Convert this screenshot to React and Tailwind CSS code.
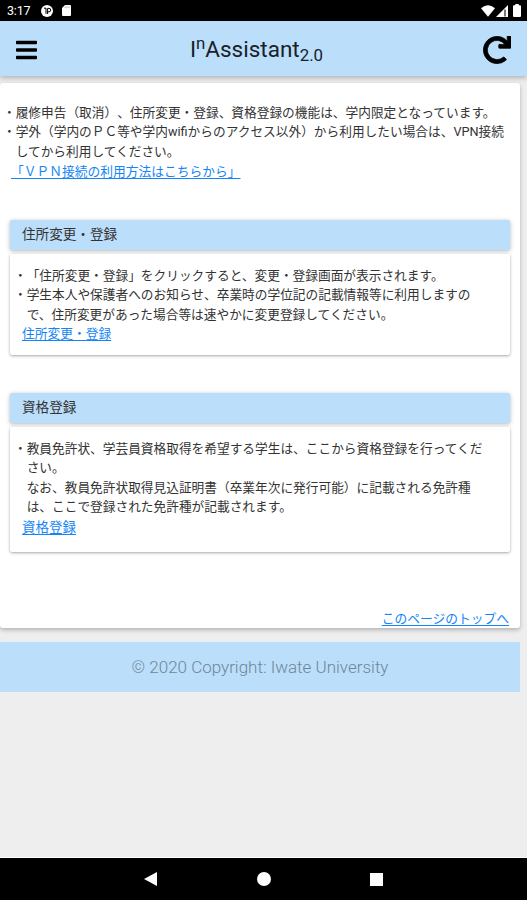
import { FaBars, FaRedo } from "react-icons/fa";

const SECCIONES = [
  {
    titulo: "住所変更・登録",
    lineas: [
      "・「住所変更・登録」をクリックすると、変更・登録画面が表示されます。",
      "・学生本人や保護者へのお知らせ、卒業時の学位記の記載情報等に利用しますの",
      "　で、住所変更があった場合等は速やかに変更登録してください。",
    ],
    enlace: "住所変更・登録",
    caja: "mt-[4px] h-[101px] mb-[1px] pt-[12px]",
    tamEnlace: "text-[12.75px]",
  },
  {
    titulo: "資格登録",
    lineas: [
      "・教員免許状、学芸員資格取得を希望する学生は、ここから資格登録を行ってくだ",
      "　さい。",
      "　なお、教員免許状取得見込証明書（卒業年次に発行可能）に記載される免許種",
      "　は、ここで登録された免許種が記載されます。",
    ],
    enlace: "資格登録",
    caja: "mt-[4px] h-[125px] pt-[12px]",
    tamEnlace: "text-[13.5px]",
  },
];

function BarraEstado() {
  return (
    <div className="h-[21px] bg-black text-white flex items-center justify-between pl-[7px] pr-[6px]">
      <div className="flex items-center">
        <span className="text-[12.5px] leading-none w-[26px] tracking-[-0.2px] mt-[2px]">3:17</span>
        <svg className="ml-[8px] w-[12px] h-[12px]" viewBox="0 0 12 12">
          <circle cx="6" cy="6" r="6" fill="#fff" />
          <path d="M3 3.200h2v5.600M6.600 9V3.400h1.400a1.600 1.600 0 0 1 0 3.400H6.600" fill="none" stroke="#000" strokeWidth="1" />
        </svg>
        <svg className="ml-[9px] w-[9px] h-[11px]" viewBox="0 0 9 11">
          <path d="M3 0h5a1 1 0 0 1 1 1v9a1 1 0 0 1-1 1H1a1 1 0 0 1-1-1V3z" fill="#fff" />
          <path d="M3.2 1.3v1.8M5 1.3v1.8M6.8 1.3v1.8" stroke="#999" strokeWidth=".7" />
        </svg>
      </div>
      <div className="flex items-center">
        <svg className="w-[14px] h-[12px]" viewBox="0 0 14 12">
          <path d="M0 3.2Q7-2.6 14 3.2L7 11.8z" fill="#fff" />
        </svg>
        <svg className="ml-[1px] w-[12px] h-[12px]" viewBox="0 0 12 12">
          <path d="M0 12L12 0v12z" fill="#fff" />
          <path d="M9 4.500v7" stroke="#555" strokeWidth="1.6" />
        </svg>
        <svg className="ml-[5px] w-[8px] h-[13px]" viewBox="0 0 8 13">
          <path d="M2.3 0h3.4v1.2H7a1 1 0 0 1 1 1V12a1 1 0 0 1-1 1H1a1 1 0 0 1-1-1V2.200a1 1 0 0 1 1-1h1.300z" fill="#fff" />
        </svg>
      </div>
    </div>
  );
}

function Enlace({ className = "", children }) {
  return (
    <a href="#top" className={`text-[#1585f5] underline decoration-1 underline-offset-[2px] whitespace-nowrap ${className}`}>
      {children}
    </a>
  );
}

function Lineas({ lineas }) {
  return lineas.map((l, i) => (
    <p key={i} className="h-[19.4px] leading-[19.4px] text-[12.69px] whitespace-pre">{l}</p>
  ));
}

function Seccion({ s }) {
  return (
    <section>
      <h2 className="h-[30px] leading-[28px] pl-[12px] bg-[#bbdefb] text-[13.6px] rounded-[2px] shadow-[0_1px_4px_rgba(0,0,0,0.3)]">
        {s.titulo}
      </h2>
      <div className={`pl-[4px] rounded-[2px] bg-white shadow-[0_1px_3px_rgba(0,0,0,0.35)] ${s.caja}`}>
        <Lineas lineas={s.lineas} />
        <p className="pl-[8px] h-[20px] leading-[20px]"><Enlace className={s.tamEnlace}>{s.enlace}</Enlace></p>
      </div>
    </section>
  );
}

export default function App() {
  return (
    <div id="top" className="w-[527px] h-[900px] flex flex-col overflow-hidden bg-[#eeeeee] text-[#333] [text-spacing-trim:space-all] font-['Roboto','Noto_Sans_CJK_JP',sans-serif]">
      <BarraEstado />

      <header className="h-[55px] shrink-0 bg-[#bbdefb] flex items-center justify-between pl-[16px] pr-[16px] text-black shadow-[0_2px_5px_rgba(0,0,0,0.25)]">
        <FaBars className="w-[21px] h-[24px] mt-[2px]" />
        <h1 className="text-[22.5px] leading-none whitespace-nowrap text-[#1a2127] font-normal mr-[7px] mt-[2px]">
          I<sup className="text-[75%]">n</sup>Assistant<sub className="text-[75%]">2.0</sub>
        </h1>
        <FaRedo className="w-[28px] h-[28px] mt-[2px]" stroke="currentColor" strokeWidth="14" />
      </header>

      <main className="w-[520px] h-[545px] mt-[7px] shrink-0 bg-white rounded-[3px] shadow-[0_2px_4px_rgba(0,0,0,0.25)] text-[12.75px] flex flex-col">
        <div className="pl-[3px] pt-[20px] h-[137px]">
          <Lineas
            lineas={[
              "・履修申告（取消）、住所変更・登録、資格登録の機能は、学内限定となっています。",
              "・学外（学内のＰＣ等や学内wifiからのアクセス以外）から利用したい場合は、VPN接続",
              "　してから利用してください。",
            ]}
          />
          <p className="pl-[8px] h-[20px] leading-[21px]"><Enlace>「ＶＰＮ接続の利用方法はこちらから」</Enlace></p>
        </div>
        <div className="pl-[10px] pr-[10px] flex flex-col gap-[37px]">
          {SECCIONES.map(s => <Seccion key={s.titulo} s={s} />)}
        </div>
        <p className="mt-auto pr-[11px] text-right leading-[19px]"><Enlace>このページのトップへ</Enlace></p>
      </main>

      <footer className="w-[520px] h-[50px] mt-[14px] shrink-0 bg-[#bbdefb] text-center text-[17px] leading-[50px] font-light text-[#6f8697]">
        © 2020 Copyright: Iwate University
      </footer>

      {/* Barra de navegación de Android */}
      <nav className="mt-auto h-[43px] shrink-0 bg-black border-t border-white flex items-center pl-[144px]">
        <svg className="w-[13px] h-[14px]" viewBox="0 0 13 14"><path d="M0 7L13 0v14z" fill="#fff" /></svg>
        <span className="ml-[100px] w-[14px] h-[14px] rounded-full bg-white" />
        <span className="ml-[99px] w-[13px] h-[13px] bg-white" />
      </nav>
    </div>
  );
}
